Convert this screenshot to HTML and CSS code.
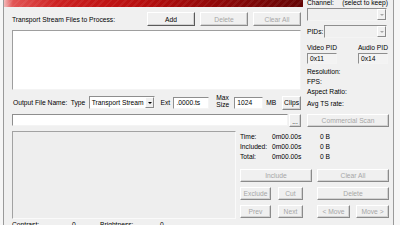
FILE: index.html
```html
<!doctype html>
<html>
  <head>
    <meta charset="utf-8">
    <title>Transport Stream Splitter</title>
    <link rel="stylesheet" href="styles.css">
  </head>
  <body>
    <div class="window">
      <div class="top">
        <div class="left">
          <div class="banner"></div>
          <div class="left-body">
            <div class="files-head">
              <span class="files-label">Transport Stream Files to Process:</span>
              <button class="btn btn-head btn-default">Add</button>
              <button class="btn btn-head" disabled>Delete</button>
              <button class="btn btn-head" disabled>Clear All</button>
            </div>
            <div class="file-list"></div>
            <div class="out-row">
              <span class="lbl lbl-out">Output File Name:</span>
              <span class="lbl lbl-type">Type</span>
              <div class="combo combo-type"><span class="combo-text">Transport Stream</span><i class="arrow"></i></div>
              <span class="lbl lbl-ext">Ext</span>
              <div class="field field-ext">.0000.ts</div>
              <span class="lbl lbl-max">Max<br>Size</span>
              <div class="field field-size">1024</div>
              <span class="lbl lbl-mb">MB</span>
              <button class="btn btn-clips">Clips</button>
            </div>
            <div class="path-row">
              <div class="field field-path"></div>
              <button class="btn btn-browse">...</button>
            </div>
          </div>
        </div>
        <div class="right">
          <div class="channel-head"><span>Channel:</span><span>(select to keep)</span></div>
          <div class="combo combo-channel disabled"><span class="combo-text"></span><i class="arrow"></i></div>
          <div class="pid-row">
            <span class="lbl lbl-pids">PIDs:</span>
            <div class="combo combo-pids disabled"><span class="combo-text"></span><i class="arrow"></i></div>
          </div>
          <div class="pid-labels"><span>Video PID</span><span>Audio PID</span></div>
          <div class="pid-fields">
            <div class="field field-pid">0x11</div>
            <div class="field field-pid">0x14</div>
          </div>
          <div class="stream-info">
            <div>Resolution:</div>
            <div>FPS:</div>
            <div>Aspect Ratio:</div>
            <div class="rate">Avg TS rate:</div>
          </div>
          <button class="btn btn-scan" disabled>Commercial Scan</button>
        </div>
      </div>

      <div class="bottom">
        <div class="preview"></div>
        <div class="cluster">
          <div class="info">
            <div class="info-row"><span class="info-name">Time:</span><span class="info-time">0m00.00s</span><span>0 B</span></div>
            <div class="info-row"><span class="info-name">Included:</span><span class="info-time">0m00.00s</span><span>0 B</span></div>
            <div class="info-row"><span class="info-name">Total:</span><span class="info-time">0m00.00s</span><span>0 B</span></div>
          </div>
          <div class="btn-row">
            <button class="btn w-wide" disabled>Include</button>
            <button class="btn w-wide gap-r" disabled>Clear All</button>
          </div>
          <div class="btn-row">
            <button class="btn w-small" disabled>Exclude</button>
            <button class="btn w-tiny gap-m" disabled>Cut</button>
            <button class="btn w-wide gap-l" disabled>Delete</button>
          </div>
          <div class="btn-row">
            <button class="btn w-small" disabled>Prev</button>
            <button class="btn w-tiny gap-m" disabled>Next</button>
            <button class="btn w-move gap-l" disabled>&lt; Move</button>
            <button class="btn w-move gap-s" disabled>Move &gt;</button>
          </div>
        </div>
      </div>

      <div class="adjust">
        <span class="adjust-name">Contrast:</span><span class="adjust-val">0</span>
        <span class="adjust-name">Brightness:</span><span class="adjust-val">0</span>
      </div>
    </div>
  </body>
</html>
```

FILE: styles.css
```css
* {
  box-sizing: border-box;
}

body {
  margin: 0;
  background: #f6f6f6;
  font-family: "Liberation Sans", Arial, sans-serif;
  font-size: 6.7px;
  color: #000;
  overflow: hidden;
}

.window {
  margin-left: 3px;
  width: 391px;
  height: 225px;
  overflow: hidden;
  background: #f0f0f0;
  border-left: 1px solid #9a9a9a;
  border-right: 1px solid #9a9a9a;
}

.top {
  display: grid;
  grid-template-columns: 299px 1fr;
}

.banner {
  height: 7px;
  background:
    repeating-linear-gradient(135deg, rgba(255,255,255,0.06) 0 2px, rgba(0,0,0,0) 2px 5px),
    linear-gradient(90deg, #f3b9b9 0%, #e25555 3%, #cc2020 18%, #b80f0f 45%, #8e0808 72%, #640505 100%);
}

.left-body {
  padding: 0 2px 0 8px;
}

/* buttons */

.btn {
  font: inherit;
  color: #000;
  background: #f0f0f0;
  border: 1px solid;
  border-color: #fff #8a8a8a #8a8a8a #fff;
  box-shadow: inset -1px -1px #d2d2d2;
  padding: 0;
  margin: 0;
  height: 13px;
  line-height: 11px;
  text-align: center;
  white-space: nowrap;
}

.btn:disabled {
  color: #a6a6a6;
}

.btn-default {
  border-color: #fff #5a5a5a #5a5a5a #fff;
}

.files-head {
  display: flex;
  align-items: center;
  height: 14px;
  margin-top: 5px;
}

.files-label {
  margin-right: auto;
}

.btn-head {
  width: 48px;
  height: 14px;
  margin-left: 5px;
}

.file-list {
  height: 60px;
  margin-top: 4px;
  background: #fff;
  border: 1px solid;
  border-color: #9e9e9e #f4f4f4 #f4f4f4 #9e9e9e;
}

/* output row */

.out-row {
  display: flex;
  align-items: center;
  height: 17px;
  margin-top: 4px;
}

.lbl {
  white-space: nowrap;
}

.lbl-out {
  width: 58px;
  margin-left: 1px;
}

.lbl-type {
  width: 18px;
}

.lbl-ext {
  width: 13px;
  margin-left: 5px;
}

.lbl-max {
  width: 18px;
  margin-left: 7px;
  align-self: flex-start;
  line-height: 7px;
}

.lbl-mb {
  width: 16px;
  margin-left: 3px;
}

.field {
  height: 12px;
  background: #fff;
  border: 1px solid;
  border-color: #8e8e8e #f4f4f4 #f4f4f4 #8e8e8e;
  padding-left: 2px;
  line-height: 10px;
  white-space: nowrap;
  overflow: hidden;
}

.field-ext {
  width: 36px;
}

.field-size {
  width: 29px;
  margin-top: 1px;
}

.btn-clips {
  width: 19px;
  height: 14px;
  line-height: 12px;
}

.combo {
  display: flex;
  height: 13px;
  background: #fff;
  border: 1px solid;
  border-color: #8e8e8e #f4f4f4 #f4f4f4 #8e8e8e;
}

.combo-text {
  flex: 1;
  padding-left: 2px;
  line-height: 11px;
  white-space: nowrap;
  overflow: hidden;
}

.arrow {
  display: flex;
  align-items: center;
  justify-content: center;
  width: 9px;
  background: #f0f0f0;
  border: 1px solid;
  border-color: #fff #8a8a8a #8a8a8a #fff;
}

.arrow::after {
  content: "";
  border-left: 2px solid transparent;
  border-right: 2px solid transparent;
  border-top: 2px solid #000;
}

.combo.disabled {
  background: #f0f0f0;
}

.combo.disabled .arrow::after {
  border-top-color: #a6a6a6;
}

.combo-type {
  width: 67px;
}

.path-row {
  display: flex;
  margin-top: 3px;
}

.field-path {
  width: 276px;
}

.btn-browse {
  width: 12px;
  margin-left: 1px;
  line-height: 13px;
}

/* right panel */

.right {
  padding: 0 4px 0 4px;
}

.channel-head {
  display: flex;
  justify-content: space-between;
  height: 9px;
  line-height: 9px;
  margin-top: -2px;
  padding-right: 1px;
}

.combo-channel {
  width: 80px;
  margin-top: 1px;
}

.pid-row {
  display: flex;
  align-items: center;
  margin-top: 4px;
}

.lbl-pids {
  width: 17px;
}

.combo-pids {
  width: 63px;
}

.pid-labels {
  display: flex;
  justify-content: space-between;
  height: 9px;
  line-height: 9px;
  margin-top: 5px;
  padding-right: 1px;
}

.pid-fields {
  display: flex;
  justify-content: space-between;
  margin-top: 1px;
  padding-right: 1px;
}

.field-pid {
  width: 30px;
  height: 11px;
  line-height: 9px;
  background: #f3f3f3;
}

.stream-info {
  margin-top: 3px;
  line-height: 10px;
}

.stream-info .rate {
  margin-top: 2px;
}

.btn-scan {
  display: block;
  width: 82px;
  margin-top: 5px;
}

/* lower half */

.bottom {
  display: flex;
  margin-top: 4px;
  padding-left: 8px;
}

.preview {
  width: 224px;
  height: 88px;
  background: #eeeeee;
  border: 1px solid;
  border-color: #a2a2a2 #fafafa #fafafa #a2a2a2;
}

.cluster {
  margin-left: 4px;
  width: 149px;
}

.info {
  margin-top: 1px;
  line-height: 10px;
}

.info-row {
  display: flex;
  white-space: nowrap;
}

.info-name {
  width: 32px;
}

.info-time {
  width: 48px;
}

.btn-row {
  display: flex;
  margin-top: 5px;
}

.info + .btn-row {
  margin-top: 7px;
}

.w-wide {
  width: 72px;
}

.w-small {
  width: 31px;
}

.w-tiny {
  width: 25px;
}

.w-move {
  width: 33px;
}

.gap-r {
  margin-left: 5px;
}

.gap-m {
  margin-left: 7px;
}

.gap-l {
  margin-left: 14px;
}

.gap-s {
  margin-left: 6px;
}

.adjust {
  display: flex;
  margin-top: 1px;
  padding-left: 8px;
  line-height: 9px;
  white-space: nowrap;
}

.adjust-name {
  width: 60px;
}

.adjust-val {
  width: 28px;
}
```
